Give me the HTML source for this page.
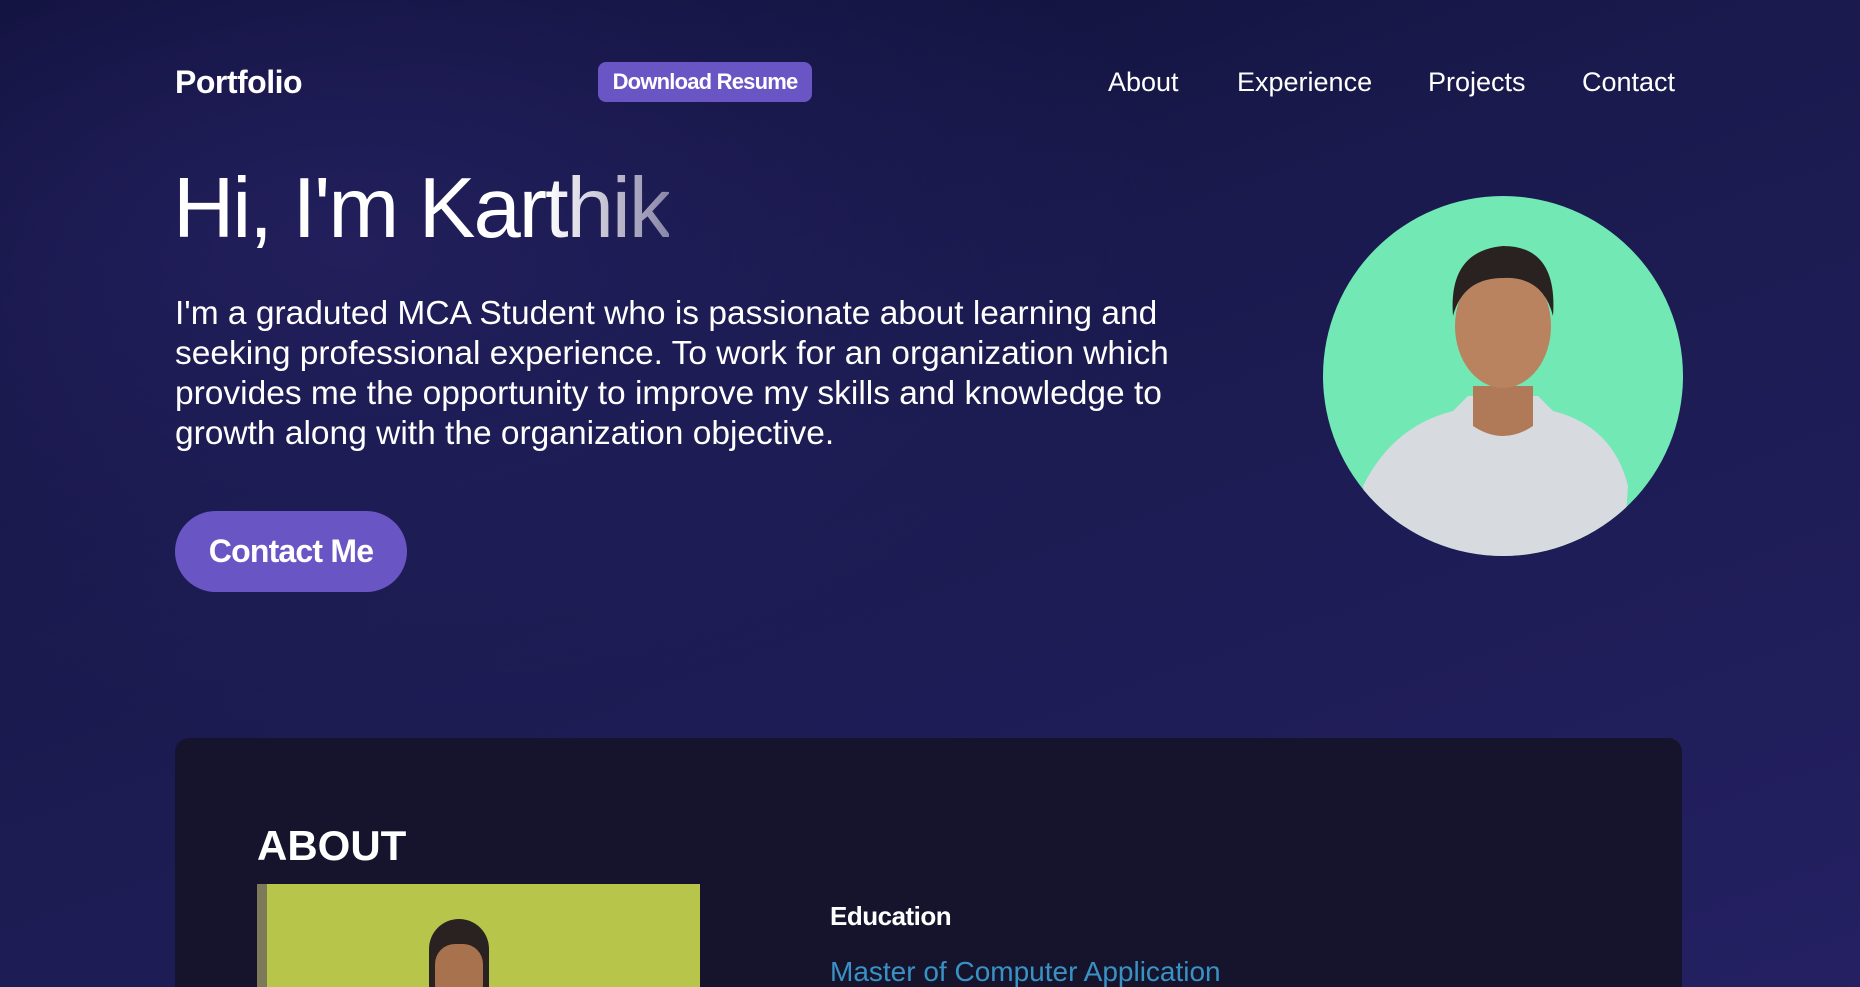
<!DOCTYPE html>
<html><head><meta charset="utf-8"><style>
*{margin:0;padding:0;box-sizing:border-box}
html,body{width:1860px;height:987px;overflow:hidden}
body{font-family:"Liberation Sans",sans-serif;color:#fff;position:relative;
background:radial-gradient(ellipse 1200px 700px at 350px 250px,#221f5c 0%,rgba(34,31,92,0) 70%),linear-gradient(160deg,#0c0d33 0%,#1a1a4e 40%,#242062 100%);}
.a{position:absolute;white-space:nowrap}
.logo{left:175px;top:64px;font-size:32px;font-weight:bold;letter-spacing:-0.5px}
.dl{left:598px;top:62px;width:214px;height:40px;background:#6a55c5;border-radius:8px;font-size:22px;font-weight:bold;text-align:center;line-height:40px;letter-spacing:-0.8px}
.nav{top:67px;font-size:27px}
h1{position:absolute;left:173px;top:160px;font-size:85px;font-weight:normal;letter-spacing:-2px;white-space:nowrap}
.g{background:linear-gradient(90deg,#fff 0%,#8a86a8 100%);-webkit-background-clip:text;background-clip:text;color:transparent}
p.t{position:absolute;left:175px;top:294px;width:1025px;font-size:33.5px;line-height:40px}
.btn{left:175px;top:511px;width:232px;height:81px;border-radius:41px;background:#6a55c5;font-size:32px;font-weight:bold;text-align:center;line-height:81px;letter-spacing:-0.8px}
.circ{left:1323px;top:196px;width:360px;height:360px;border-radius:50%;background:#72e8b5;overflow:hidden}
.card{left:175px;top:738px;width:1507px;height:249px;background:#15142c;border-radius:14px 14px 0 0}
</style></head><body>
<div class="a logo">Portfolio</div>
<div class="a dl">Download Resume</div>
<div class="a nav" style="left:1108px">About</div>
<div class="a nav" style="left:1237px">Experience</div>
<div class="a nav" style="left:1428px">Projects</div>
<div class="a nav" style="left:1582px">Contact</div>
<h1>Hi, I'm Kar<span class="g">thik</span></h1>
<p class="t">I'm a graduted MCA Student who is passionate about learning and seeking professional experience. To work for an organization which provides me the opportunity to improve my skills and knowledge to growth along with the organization objective.</p>
<div class="a btn">Contact Me</div>
<div class="a circ">
<svg width="360" height="360" viewBox="0 0 360 360">
<path d="M40 290 Q70 230 130 215 L145 200 L215 200 L230 215 Q290 230 305 290 L300 360 L50 360 Z" fill="#d7dbe0"/>
<path d="M150 190 L150 230 Q180 250 210 230 L210 190 Z" fill="#b07a58"/>
<ellipse cx="180" cy="130" rx="48" ry="62" fill="#b98360"/>
<path d="M130 120 Q125 55 180 50 Q235 50 230 120 Q220 80 180 82 Q140 82 130 120Z" fill="#2a2220"/>
</svg>
</div>
<div class="a card"></div>
<div class="a" style="left:257px;top:822px;font-size:42px;font-weight:bold">ABOUT</div>
<div class="a" style="left:257px;top:884px;width:443px;height:103px;background:#b7c64a;overflow:hidden">
<div style="position:absolute;left:0;top:0;width:10px;height:110px;background:#7d7a5a"></div>
<div style="position:absolute;left:172px;top:35px;width:60px;height:80px;border-radius:30px 30px 0 0;background:#2a2220"></div>
<div style="position:absolute;left:178px;top:60px;width:48px;height:60px;border-radius:20px;background:#a8724f"></div>
</div>
<div class="a" style="left:830px;top:901px;font-size:26px;font-weight:bold;letter-spacing:-0.5px">Education</div>
<div class="a" style="left:830px;top:956px;font-size:28px;color:#3a91c4">Master of Computer Application</div>
</body></html>
